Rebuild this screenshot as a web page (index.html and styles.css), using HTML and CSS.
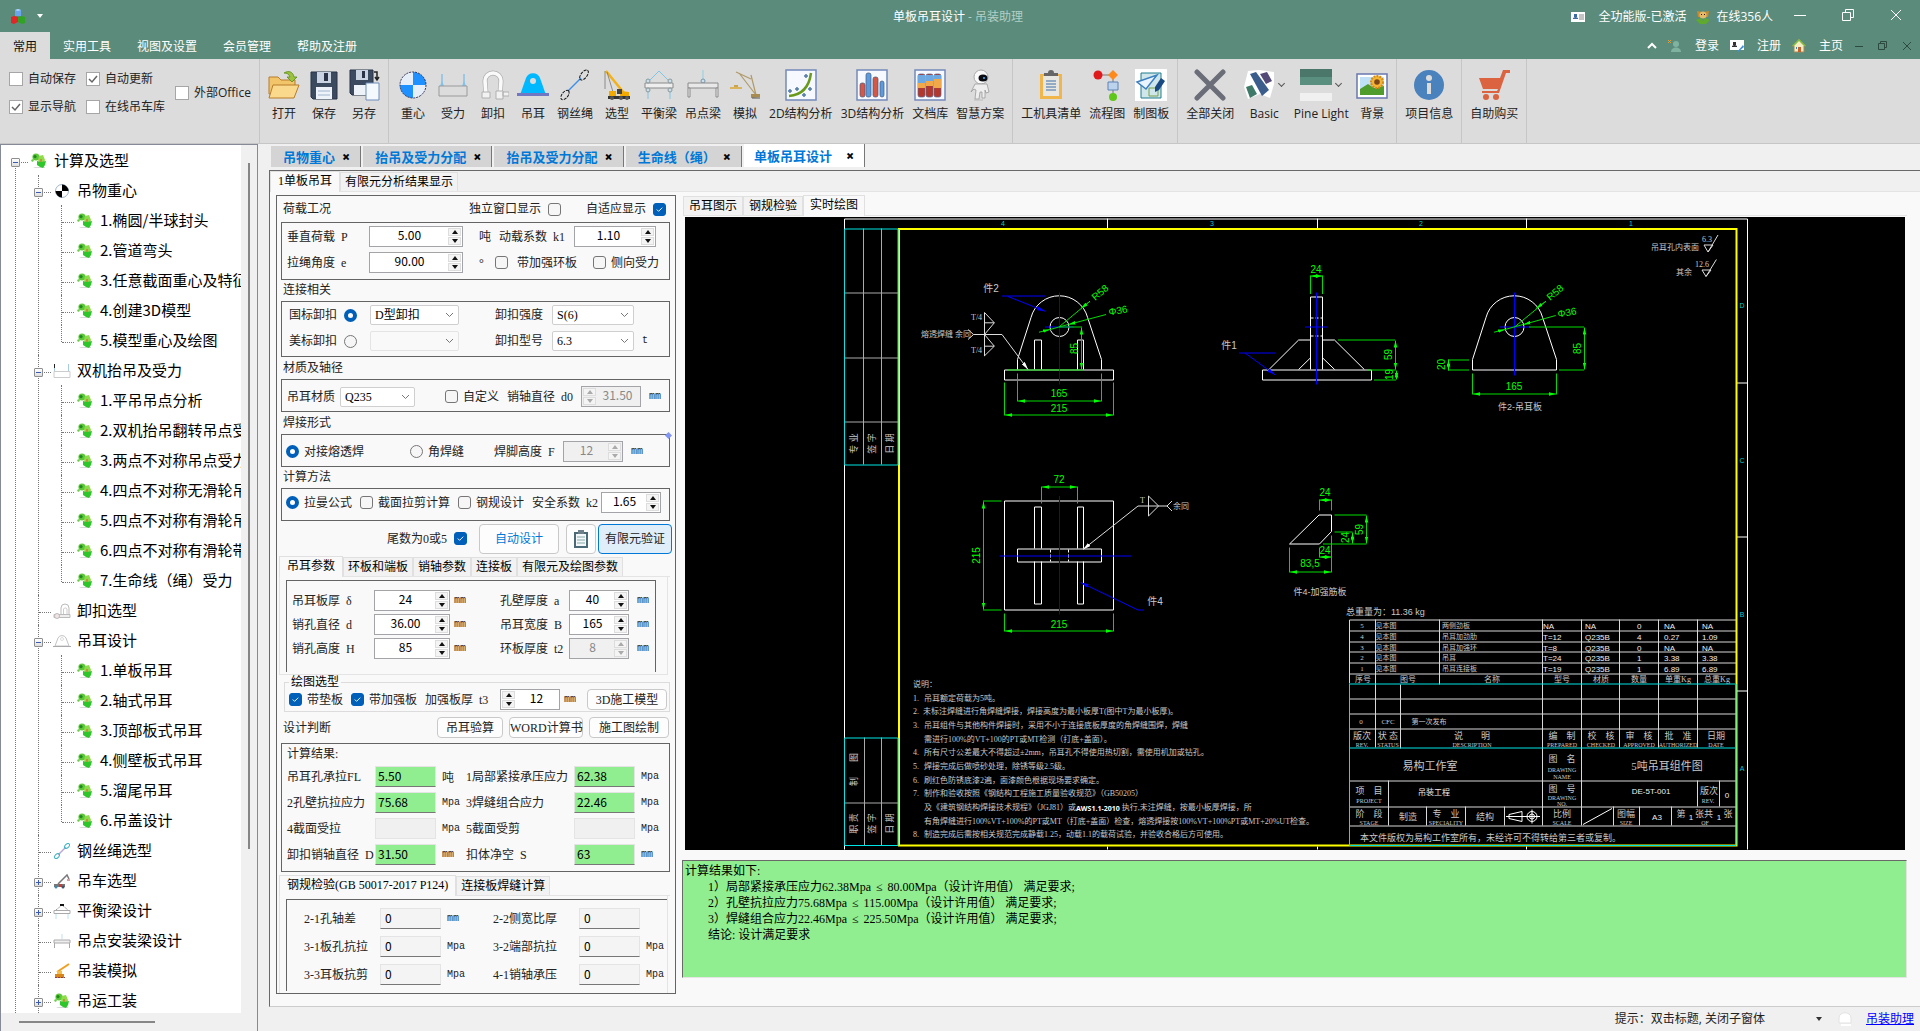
FILE: index.html
```html
<!DOCTYPE html>
<html lang="zh-CN">
<head>
  <meta charset="UTF-8">
  <meta name="viewport" content="width=device-width, initial-scale=1.0">
  <title>单板吊耳设计 - 吊装助理</title>
  <link rel="stylesheet" href="styles.css">
</head>
<body>
  <!-- Icon set -->
  <svg class="defs" aria-hidden="true">
    <symbol id="i-leaf" viewBox="0 0 16 16">
      <path d="M2 14h12v1H4z" fill="#d8d8d8"/>
      <circle cx="5" cy="4" r="3.6" fill="#5cc83a"/><circle cx="4" cy="3.6" r="1.6" fill="#1f8a1a"/>
      <path d="M8 3l4-1 2 5-1 3-4 1-2-4z" fill="#8fdc4a"/>
      <path d="M6 8l4 1 5-1-1 4-2 3-3-1-3-2z" fill="#2fc62c"/>
      <path d="M1 6l2 1-1 2-2-1z" fill="#6ccf48"/><path d="M9 6h2v3H9z" fill="#b39a3c"/>
    </symbol>
    <symbol id="i-cg" viewBox="0 0 16 16">
      <circle cx="8" cy="8" r="6.5" fill="#fff" stroke="#9fb4c8"/><path d="M8 8V1.5A6.5 6.5 0 0 1 14.5 8zM8 8v6.5A6.5 6.5 0 0 1 1.5 8z" fill="#000"/>
    </symbol>
    <symbol id="i-lift" viewBox="0 0 18 16">
      <path d="M1.5 1v7M15.5 1v7" stroke="#a8cbe4" fill="none"/><path d="M1.5 1v4" stroke="#222"/><path d="M1 8.5h16v6H1z" fill="#fff" stroke="#ccc"/>
    </symbol>
    <symbol id="i-shk" viewBox="0 0 18 16">
      <path d="M8 12V5a4 4 0 0 1 8 0v7" fill="none" stroke="#bbb"/><path d="M10.5 11V6a2 2 0 0 1 3.5 0v5" fill="none" stroke="#ccc"/><path d="M1 11.5h16v3H1z" fill="#eee" stroke="#bbb"/><circle cx="4" cy="13" r="2.5" fill="#f4e4e4" stroke="#bbb"/>
    </symbol>
    <symbol id="i-lugs" viewBox="0 0 18 16">
      <path d="M2 13l3-8a4.500 4.500 0 0 1 8 0l3 8z" fill="#fff" stroke="#c4c4c4"/><circle cx="9" cy="6" r="1.5" fill="none" stroke="#ddd"/><path d="M0 13.5h18" stroke="#aaa"/>
    </symbol>
    <symbol id="i-sling" viewBox="0 0 18 16">
      <path d="M5 12l8-8" stroke="#b8a8d8" stroke-width="1.5"/><ellipse cx="14" cy="3" rx="3" ry="1.8" transform="rotate(-45 14 3)" fill="none" stroke="#3cb4c0"/><ellipse cx="4" cy="13" rx="3" ry="1.8" transform="rotate(-45 4 13)" fill="none" stroke="#3cb4c0"/>
    </symbol>
    <symbol id="i-truck" viewBox="0 0 18 16">
      <path d="M5 11l9-9 2 4" fill="none" stroke="#777" stroke-width="1.5"/><path d="M14 6h3v2h-3z" fill="#d9a0a0"/><path d="M1 11h11v3H1z" fill="#777"/><path d="M6 11h3v3H6z" fill="#d23a3a"/><circle cx="3" cy="14" r="1.5" fill="#48a"/><circle cx="10" cy="14" r="1.5" fill="#456"/>
    </symbol>
    <symbol id="i-beam" viewBox="0 0 18 16">
      <path d="M3 7l6-5 6 5" fill="none" stroke="#999" stroke-dasharray="2 1"/><path d="M7 1h4v2H7z" fill="#111"/><path d="M1 7.5h16v3H1z" fill="#fff" stroke="#aaa"/><path d="M3 11v5M15 11v5" stroke="#b5e4f4"/>
    </symbol>
    <symbol id="i-sup" viewBox="0 0 18 16">
      <path d="M9 1v5" stroke="#c4dfe8"/><path d="M1 7h16v3H1z" fill="#eee" stroke="#aaa"/><path d="M1.5 10v5M16.5 10v5" stroke="#aaa"/>
    </symbol>
    <symbol id="i-sim" viewBox="0 0 18 16">
      <path d="M4 9L16 1" stroke="#f0a020" stroke-width="2"/><path d="M2 11h9v4H2z" fill="#d8861c"/><path d="M4 8h5v3H4z" fill="#f4c04c"/><path d="M2 14.5h10" stroke="#844" stroke-dasharray="2 1"/>
    </symbol>

    <symbol id="r-open" viewBox="0 0 32 32">
      <path d="M1 8h9l3 3h14v14H1z" fill="#f2c56b" stroke="#b67d2b"/><path d="M5 16h26l-5 13H1z" fill="#fbd98c" stroke="#b67d2b"/><path d="M16 4c5-3 9-1 10 4h3l-5 5-5-5h3c-1-3-3-4-6-4z" fill="#9cc23e" stroke="#5b8a1e" stroke-width=".8"/>
    </symbol>
    <symbol id="r-save" viewBox="0 0 32 32">
      <path d="M3 3h26v27H5l-2-2z" fill="#3c4a60" stroke="#273246"/><path d="M9 3h14v11H9z" fill="#c9d3e2"/><path d="M16 4h4v8h-4z" fill="#2a3446"/><path d="M8 18h16v12H8z" fill="#eef3f9"/><path d="M10 22h12M10 26h12" stroke="#9fb4cc"/>
    </symbol>
    <symbol id="r-saveas" viewBox="0 0 32 32">
      <path d="M2 1h23v25H4l-2-2z" fill="#3c4a60" stroke="#273246"/><path d="M8 1h12v10H8z" fill="#c9d3e2"/><path d="M14 2h3v7h-3z" fill="#2a3446"/><path d="M6 16h12v10H6z" fill="#eef3f9"/><path d="M18 14h13v17H18z" fill="#f4f8ff" stroke="#6f8cb8"/><path d="M26 3h3v8m-2-3l2 3 2-3" fill="none" stroke="#222" stroke-width="1.5"/>
    </symbol>
    <symbol id="r-cg" viewBox="0 0 32 32">
      <circle cx="16" cy="16" r="13" fill="#e6eef8"/><path d="M16 16V3a13 13 0 0 1 13 13zM16 16v13A13 13 0 0 1 3 16z" fill="#1e90ff"/><circle cx="16" cy="16" r="13" fill="none" stroke="#335" stroke-dasharray="2 1"/>
    </symbol>
    <symbol id="r-force" viewBox="0 0 32 32">
      <path d="M5 5v12M27 5v12" stroke="#5fb4ea"/><path d="M5 12l-2 5h4zM27 12l-2 5h4z" fill="#7fc3ee"/><path d="M2 17h28v10H2z" fill="none" stroke="#9a9a9a"/>
    </symbol>
    <symbol id="r-shk" viewBox="0 0 32 32">
      <path d="M9 26l-1-14a8 8 0 0 1 16 0l-1 14" fill="none" stroke="#b0b0b0" stroke-width="5"/><path d="M9 26l-1-14a8 8 0 0 1 16 0l-1 14" fill="none" stroke="#fafafa" stroke-width="3.6"/><path d="M5 23h8v6H5zM19 22h7v8h-7zM26 23h6v4h-6z" fill="#f2f2f2" stroke="#b0b0b0"/>
    </symbol>
    <symbol id="r-lug" viewBox="0 0 32 32">
      <path d="M3 26L9 9a7.500 7.500 0 0 1 14 0l6 17z" fill="#00b8ff"/><circle cx="16" cy="12" r="3" fill="#dcdcdc"/><path d="M0 24h32v3H0z" fill="#7078c4"/>
    </symbol>
    <symbol id="r-sling" viewBox="0 0 32 32">
      <path d="M9 22L22 9" stroke="#3f8fe8" stroke-width="1.5"/><ellipse cx="25" cy="6" rx="6" ry="3" transform="rotate(-52 25 6)" fill="none" stroke="#111" stroke-dasharray="3 1"/><ellipse cx="6" cy="26" rx="5.5" ry="3" transform="rotate(-52 6 26)" fill="none" stroke="#111" stroke-dasharray="3 1"/>
    </symbol>
    <symbol id="r-crane" viewBox="0 0 32 32">
      <path d="M5 2l18 22" stroke="#f5b014" stroke-width="2.5"/><path d="M4 2v18M6 3l6 20" stroke="#777" stroke-width=".8"/><path d="M8 22h7v6H8zM19 22l9 1v6h-9z" fill="#f2a900"/><path d="M7 27h22v3H7z" fill="#333"/><path d="M16 20h5v5h-5z" fill="#444"/><circle cx="11" cy="29" r="2" fill="#555"/><circle cx="20" cy="29" r="2" fill="#555"/><circle cx="26" cy="29" r="2" fill="#555"/>
    </symbol>
    <symbol id="r-beam" viewBox="0 0 32 32">
      <path d="M5 13L16 2l11 11M5 20v10M27 20v10" fill="none" stroke="#7fc6e6"/><path d="M2 14h28v5H2z" fill="#eee" stroke="#8a8a8a"/><circle cx="5" cy="12" r="2" fill="#cde" stroke="#899"/><circle cx="27" cy="12" r="2" fill="#cde" stroke="#899"/><circle cx="5" cy="21" r="2" fill="#cde" stroke="#899"/><circle cx="27" cy="21" r="2" fill="#cde" stroke="#899"/>
    </symbol>
    <symbol id="r-sup" viewBox="0 0 32 32">
      <path d="M16 1v11" stroke="#8fcfe4"/><circle cx="16" cy="12" r="2" fill="#cde" stroke="#79a"/><path d="M1 14h30v5H1z" fill="#e8e8e8" stroke="#8a8a8a"/><path d="M1 19h2v9H1zM29 19h2v9h-2z" fill="#eee" stroke="#8a8a8a"/>
    </symbol>
    <symbol id="r-sim" viewBox="0 0 32 32">
      <path d="M7 3l15 7M22 6l5 20M10 4l17 22" fill="none" stroke="#b09a68" stroke-width="1.2"/><path d="M22 25h9v3l-9 1z" fill="#a88b50"/><path d="M23 29h8" stroke="#555"/><path d="M1 18h12v2H1z" fill="#d9b45c"/><path d="M5 16h4v2H5z" fill="#c9a44c"/>
    </symbol>
    <symbol id="r-2d" viewBox="0 0 32 32">
      <path d="M1 1h30v30H1z" fill="#f6f9ff" stroke="#7489bb" stroke-width="1.5"/><path d="M4 27c13-1 20-8 22-23" fill="none" stroke="#6a9a1c" stroke-width="2.5"/><g fill="#9ab" stroke="#35679a"><circle cx="5" cy="22" r="1.3"/><circle cx="12" cy="20" r="1.3"/><circle cx="21" cy="7" r="1.3"/><circle cx="25" cy="20" r="1.3"/><circle cx="19" cy="26" r="1.3"/></g>
    </symbol>
    <symbol id="r-3d" viewBox="0 0 32 32">
      <path d="M1 1h30v30H1z" fill="#f6f9ff" stroke="#7489bb" stroke-width="1.5"/><g stroke="#46597e" stroke-width=".7"><rect x="4" y="14" width="5" height="14" rx="2" fill="#d55847"/><rect x="10" y="4" width="5" height="24" rx="2" fill="#5c9bdc"/><rect x="17" y="8" width="5" height="20" rx="2" fill="#d55847"/><rect x="24" y="12" width="4" height="16" rx="2" fill="#5c9bdc"/></g>
    </symbol>
    <symbol id="r-doc" viewBox="0 0 32 32">
      <path d="M1 1h30v30H1z" fill="#f6f9ff" stroke="#7489bb" stroke-width="1.5"/><g stroke="#57658a" stroke-width=".7"><rect x="4" y="5" width="7" height="23" rx="2" fill="#b5372b"/><rect x="12" y="5" width="7" height="23" rx="2" fill="#b5372b"/><rect x="20" y="5" width="7" height="23" rx="2" fill="#b5372b"/></g><path d="M4 6h7v8H4zM12 6h7v6h-7zM20 6h7v4h-7z" fill="#6ea8e0"/><path d="M4 14h7v5H4zM12 12h7v5h-7zM20 10h7v9h-7z" fill="#f0a84a"/>
    </symbol>
    <symbol id="r-robot" viewBox="0 0 32 32">
      <ellipse cx="17" cy="8" rx="7" ry="7" fill="#fafafa" stroke="#aaa"/><ellipse cx="19" cy="9" rx="4.5" ry="3.5" fill="#0b0d12"/><circle cx="20" cy="9" r="1" fill="#4fb5ff"/><path d="M11 15h12l2 8-3 1-1-3v8h-3v-6h-2l-1 7h-4l1-9-2-1-3 3z" fill="#eee" stroke="#999" stroke-width=".8"/><path d="M10 31h9" stroke="#bbb"/>
    </symbol>
    <symbol id="r-clip" viewBox="0 0 32 32">
      <path d="M5 5h22v25H5z" fill="#f0b64c"/><path d="M8 7h16v20H8z" fill="#e8e6e0"/><path d="M9 7V4h4a3 3 0 0 1 6 0h4v3z" fill="#666"/><path d="M11 12h10M11 15h10M11 18h10M11 21h10" stroke="#3f6fa8"/>
    </symbol>
    <symbol id="r-flow" viewBox="0 0 32 32">
      <path d="M8 6h14v22" fill="none" stroke="#777"/><circle cx="7" cy="6" r="4.5" fill="#e01a1a"/><path d="M22 1l5 5-5 5-5-5z" fill="#ff8a1c"/><path d="M17 13h10v8H17z" fill="#bcd3ee" stroke="#5c82b5"/><circle cx="22" cy="28" r="4" fill="#5fc61a"/>
    </symbol>
    <symbol id="r-board" viewBox="0 0 32 32">
      <path d="M0 0h32v32H0z" fill="#fff"/><path d="M6 4h20v25H6z" fill="#cfe7ea" stroke="#1e7c8c"/><path d="M2 13L22 6 11 20z" fill="#eaf4ff" stroke="#3b7fc0" stroke-width="1.5"/><path d="M14 19h9v8h-9z" fill="none" stroke="#77a04c"/><path d="M26 9l4 3-6 9-4 2v-5z" fill="#1a4a86"/>
    </symbol>
    <symbol id="r-x" viewBox="0 0 32 32"><path d="M3 3l26 26M29 3L3 29" stroke="#6b6e78" stroke-width="5" stroke-linecap="round"/></symbol>
    <symbol id="r-basic" viewBox="0 0 32 32">
      <path d="M5 2l11-1 15 2v12l-4 14-10-4-12 5-4-12z" fill="#fff"/><path d="M7 5l6-2 13 18-7 6z" fill="#3a5d8c"/><path d="M17 5l7-2 5 9-6 3z" fill="#544a78"/><path d="M3 18l6-2 5 9-7 4z" fill="#3f7a68"/>
    </symbol>
    <symbol id="r-pine" viewBox="0 0 32 32">
      <path d="M0 0h32v9H0z" fill="#4a776a"/><path d="M0 8h32v8H0z" fill="#5a8f7f"/><path d="M0 16h32v8H0z" fill="#dcdcdc"/><path d="M0 24h32v8H0z" fill="#f0f0f0"/>
    </symbol>
    <symbol id="r-sun" viewBox="0 0 32 32">
      <path d="M1 5h30v24H1z" fill="#fff" stroke="#6a78b0" stroke-width="1.5"/><path d="M4 8h24v18H4z" fill="#bfe0f5"/><path d="M4 20l8-5 6 4 10-2v9H4z" fill="#4f9c2c"/><circle cx="21" cy="13" r="6" fill="#f4b535" stroke="#d48a14" stroke-width="2" stroke-dasharray="2 1"/><circle cx="21" cy="13" r="2.8" fill="#7a4518"/>
    </symbol>
    <symbol id="r-info" viewBox="0 0 32 32"><circle cx="16" cy="16" r="15" fill="#4a82bd"/><circle cx="16" cy="9" r="3" fill="#dcdcdc"/><path d="M14 14h4v11h-4z" fill="#dcdcdc"/></symbol>
    <symbol id="r-cart" viewBox="0 0 32 32"><path d="M1 9h21l3-8h7v3h-4l-7 20H4v-2h15l1-2H5z" fill="#db6340"/><circle cx="8" cy="28" r="3" fill="#db6340"/><circle cx="18" cy="28" r="3" fill="#db6340"/></symbol>
  </svg>

  <!-- Title bar -->
  <header class="titlebar">
    <div class="quick">
      <svg width="16" height="16" viewBox="0 0 16 16"><path d="M5 1l3-1 3 1v6H5z" fill="#6aa6ec"/><path d="M5 1l3-1 3 1-3 1z" fill="#b4d6fa"/><path d="M1 8l3-1 4 1v5l-4 2-3-1z" fill="#e02626"/><path d="M8 8l4-1 3 1v6l-3 1-4-2z" fill="#30a326"/></svg>
      <svg width="8" height="5" viewBox="0 0 8 5"><path d="M1 0h6L4 4z" fill="#fff"/></svg>
    </div>
    <h1>单板吊耳设计 <span>- 吊装助理</span></h1>
    <div class="licence">
      <svg width="14" height="12" viewBox="0 0 14 12"><path d="M0 1h14v10H0z" fill="#fff"/><path d="M2 8h5V7L5 6H4L2 7zM3 3h3v3H3z" fill="#3c6ea5"/><path d="M8 4h5M8 6h5M8 8h5" stroke="#888"/></svg>
      <span class="state">全功能版-已激活</span>
      <svg width="16" height="16" viewBox="0 0 16 16"><path d="M2 2l5 1 2 0 5-1-1 6H3z" fill="#c98a2e"/><circle cx="8" cy="6" r="3.5" fill="#e3b96a"/><path d="M1 11l5-2 2 3 2-3 5 2-4 4H5z" fill="#5faa2c"/><path d="M6 5h1v1H6zM9 5h1v1H9z" fill="#312"/></svg>
      <span>在线356人</span>
    </div>
    <div class="winbtns">
      <button aria-label="最小化"><svg width="12" height="12"><path d="M0 6.5h12" stroke="#fff"/></svg></button>
      <button aria-label="还原"><svg width="12" height="12"><path d="M.5 3.5h8v8h-8zM3.5 3V.5h8v8H9" fill="none" stroke="#fff"/></svg></button>
      <button aria-label="关闭"><svg width="12" height="12"><path d="M1 1l10 10M11 1L1 11" stroke="#fff"/></svg></button>
    </div>
  </header>

  <nav class="menubar">
    <a class="menu active" href="#">常用</a>
    <a class="menu" href="#">实用工具</a>
    <a class="menu" href="#">视图及设置</a>
    <a class="menu" href="#">会员管理</a>
    <a class="menu" href="#">帮助及注册</a>
    <div class="account">
      <svg width="10" height="8"><path d="M1 6l4-4 4 4" fill="none" stroke="#fff" stroke-width="2"/></svg>
      <a href="#"><svg width="14" height="14"><circle cx="8" cy="5" r="3" fill="#7fb3a0"/><path d="M3 13c0-6 10-6 10 0z" fill="#7fb3a0"/><path d="M0 1l3 3M3 1L0 4" stroke="#d8a040"/></svg>登录</a>
      <a href="#"><svg width="14" height="14"><path d="M0 1h14v10H0z" fill="#fff"/><path d="M2 8h5V7L5 6H4L2 7zM3 3h3v3H3z" fill="#333"/><path d="M13 6l1 2-6 5H7z" fill="#3f8fe0"/></svg>注册</a>
      <a href="#"><svg width="14" height="15"><path d="M7 1L0 8h2v6h10V8h2z" fill="#f8ecc4" stroke="#9c8a5a"/><path d="M7 1L0 8h2l5-5 5 5h2z" fill="#7ac143"/><path d="M6 9h3v5H6z" fill="#c2602c"/><path d="M4 9h1v2H4z" fill="#48a"/></svg>主页</a>
      <span class="mdi">
        <svg width="10" height="10"><path d="M1 5.5h8" stroke="#2d4a41"/></svg>
        <svg width="10" height="10"><path d="M.5 2.5h6v6h-6zM2.5 2V.5h6v6H7" fill="none" stroke="#2d4a41"/></svg>
        <svg width="10" height="10"><path d="M1 1l8 8M9 1L1 9" stroke="#2d4a41"/></svg>
      </span>
    </div>
  </nav>

  <!-- Ribbon -->
  <section class="ribbon">
    <div class="options">
      <div class="col">
        <label><input type="checkbox">自动保存</label>
        <label><input type="checkbox" checked>显示导航</label>
      </div>
      <div class="col">
        <label><input type="checkbox" checked>自动更新</label>
        <label><input type="checkbox">在线吊车库</label>
      </div>
      <div class="col mid">
        <label><input type="checkbox">外部Office</label>
      </div>
    </div>
    <div class="group">
      <button><svg><use href="#r-open"/></svg>打开</button>
      <button><svg><use href="#r-save"/></svg>保存</button>
      <button><svg><use href="#r-saveas"/></svg>另存</button>
    </div>
    <div class="group">
      <button><svg><use href="#r-cg"/></svg>重心</button>
      <button><svg><use href="#r-force"/></svg>受力</button>
      <button><svg><use href="#r-shk"/></svg>卸扣</button>
      <button><svg><use href="#r-lug"/></svg>吊耳</button>
      <button><svg><use href="#r-sling"/></svg>钢丝绳</button>
      <button><svg><use href="#r-crane"/></svg>选型</button>
      <button><svg><use href="#r-beam"/></svg>平衡梁</button>
      <button><svg><use href="#r-sup"/></svg>吊点梁</button>
      <button><svg><use href="#r-sim"/></svg>模拟</button>
      <button><svg><use href="#r-2d"/></svg>2D结构分析</button>
      <button><svg><use href="#r-3d"/></svg>3D结构分析</button>
      <button><svg><use href="#r-doc"/></svg>文档库</button>
      <button><svg><use href="#r-robot"/></svg>智慧方案</button>
    </div>
    <div class="group">
      <button><svg><use href="#r-clip"/></svg>工机具清单</button>
      <button><svg><use href="#r-flow"/></svg>流程图</button>
      <button><svg><use href="#r-board"/></svg>制图板</button>
    </div>
    <div class="group">
      <button><svg><use href="#r-x"/></svg>全部关闭</button>
      <button class="drop"><span><svg><use href="#r-basic"/></svg><i></i></span>Basic</button>
      <button class="drop wide"><span><svg><use href="#r-pine"/></svg><i></i></span>Pine Light</button>
      <button><svg><use href="#r-sun"/></svg>背景</button>
    </div>
    <div class="group">
      <button><svg><use href="#r-info"/></svg>项目信息</button>
    </div>
    <div class="group">
      <button><svg><use href="#r-cart"/></svg>自助购买</button>
    </div>
  </section>

  <main class="workspace">
    <!-- Navigation tree -->
    <aside class="sidebar">
      <div class="tree-wrap">
        <ul class="tree">
          <li class="open">
            <div class="node"><b class="exp minus"></b><svg><use href="#i-leaf"/></svg>计算及选型</div>
            <ul>
              <li><div class="node"><b class="exp minus"></b><svg><use href="#i-cg"/></svg>吊物重心</div>
                <ul>
                  <li><div class="node"><svg><use href="#i-leaf"/></svg>1.椭圆/半球封头</div></li>
                  <li><div class="node"><svg><use href="#i-leaf"/></svg>2.管道弯头</div></li>
                  <li><div class="node"><svg><use href="#i-leaf"/></svg>3.任意截面重心及特征</div></li>
                  <li><div class="node"><svg><use href="#i-leaf"/></svg>4.创建3D模型</div></li>
                  <li><div class="node"><svg><use href="#i-leaf"/></svg>5.模型重心及绘图</div></li>
                </ul>
              </li>
              <li><div class="node"><b class="exp minus"></b><svg><use href="#i-lift"/></svg>双机抬吊及受力</div>
                <ul>
                  <li><div class="node"><svg><use href="#i-leaf"/></svg>1.平吊吊点分析</div></li>
                  <li><div class="node"><svg><use href="#i-leaf"/></svg>2.双机抬吊翻转吊点受力</div></li>
                  <li><div class="node"><svg><use href="#i-leaf"/></svg>3.两点不对称吊点受力</div></li>
                  <li><div class="node"><svg><use href="#i-leaf"/></svg>4.四点不对称无滑轮吊点</div></li>
                  <li><div class="node"><svg><use href="#i-leaf"/></svg>5.四点不对称有滑轮吊点</div></li>
                  <li><div class="node"><svg><use href="#i-leaf"/></svg>6.四点不对称有滑轮带梁</div></li>
                  <li><div class="node"><svg><use href="#i-leaf"/></svg>7.生命线（绳）受力</div></li>
                </ul>
              </li>
              <li><div class="node"><svg><use href="#i-shk"/></svg>卸扣选型</div></li>
              <li><div class="node"><b class="exp minus"></b><svg><use href="#i-lugs"/></svg>吊耳设计</div>
                <ul>
                  <li><div class="node"><svg><use href="#i-leaf"/></svg>1.单板吊耳</div></li>
                  <li><div class="node"><svg><use href="#i-leaf"/></svg>2.轴式吊耳</div></li>
                  <li><div class="node"><svg><use href="#i-leaf"/></svg>3.顶部板式吊耳</div></li>
                  <li><div class="node"><svg><use href="#i-leaf"/></svg>4.侧壁板式吊耳</div></li>
                  <li><div class="node"><svg><use href="#i-leaf"/></svg>5.溜尾吊耳</div></li>
                  <li><div class="node"><svg><use href="#i-leaf"/></svg>6.吊盖设计</div></li>
                </ul>
              </li>
              <li><div class="node"><svg><use href="#i-sling"/></svg>钢丝绳选型</div></li>
              <li><div class="node"><b class="exp plus"></b><svg><use href="#i-truck"/></svg>吊车选型</div></li>
              <li><div class="node"><b class="exp plus"></b><svg><use href="#i-beam"/></svg>平衡梁设计</div></li>
              <li><div class="node"><svg><use href="#i-sup"/></svg>吊点安装梁设计</div></li>
              <li><div class="node"><svg><use href="#i-sim"/></svg>吊装模拟</div></li>
              <li><div class="node"><b class="exp plus"></b><svg><use href="#i-leaf"/></svg>吊运工装</div></li>
            </ul>
          </li>
        </ul>
      </div>
      <div class="vbar"><i></i></div>
      <div class="hbar"><i></i></div>
    </aside>

    <div class="docs">
      <div class="doctabs">
        <button class="dt">吊物重心<b>×</b></button>
        <button class="dt">抬吊及受力分配<b>×</b></button>
        <button class="dt">抬吊及受力分配<b>×</b></button>
        <button class="dt">生命线（绳）<b>×</b></button>
        <button class="dt on">单板吊耳设计<b>×</b></button>
      </div>

      <div class="page">
        <div class="tabs top">
          <button class="tab on">1单板吊耳</button>
          <button class="tab">有限元分析结果显示</button>
        </div>
        <div class="split">

          <!-- Input form -->
          <form class="form">
            <div class="head">
              <h2>荷载工况</h2>
              <label class="ck rev far">独立窗口显示<input type="checkbox"></label>
              <label class="ck rev">自适应显示<input type="checkbox" checked></label>
            </div>
            <div class="box load">
              <div class="row">
                <label class="w82" for="p">垂直荷载&ensp;P</label>
                <span class="spin w94"><input id="p" value="5.00"><span class="ud"><button type="button" aria-label="增加"></button><button type="button" aria-label="减少"></button></span></span>
                <span class="g16 w20">吨</span>
                <label class="w75" for="k1">动载系数&ensp;k1</label>
                <span class="spin w82"><input id="k1" value="1.10"><span class="ud"><button type="button" aria-label="增加"></button><button type="button" aria-label="减少"></button></span></span>
              </div>
              <div class="row">
                <label class="w82" for="e">拉绳角度&ensp;e</label>
                <span class="spin w94"><input id="e" value="90.00"><span class="ud"><button type="button" aria-label="增加"></button><button type="button" aria-label="减少"></button></span></span>
                <span class="g16 w16">°</span>
                <label class="ck loose"><input type="checkbox">带加强环板</label>
                <label class="ck g16"><input type="checkbox">侧向受力</label>
              </div>
            </div>

            <h2 class="cap">连接相关</h2>
            <div class="box link">
              <div class="row">
                <label class="ck rev w81">国标卸扣<input type="radio" name="std" checked></label>
                <select class="w89" aria-label="国标卸扣"><option>D型卸扣</option></select>
                <label class="g36 w57" for="grade">卸扣强度</label>
                <select class="w82" id="grade"><option>S(6)</option></select>
              </div>
              <div class="row">
                <label class="ck rev w81">美标卸扣<input type="radio" name="std"></label>
                <select class="w89" disabled aria-label="美标卸扣"><option></option></select>
                <label class="g36 w57" for="model">卸扣型号</label>
                <select class="w82" id="model"><option>6.3</option></select>
                <span class="unit g8">t</span>
              </div>
            </div>

            <h2 class="cap tall">材质及轴径</h2>
            <div class="box mat">
              <div class="row">
                <label class="w53" for="mat">吊耳材质</label>
                <select class="w75" id="mat"><option>Q235</option></select>
                <label class="ck g30"><input type="checkbox">自定义</label>
                <label class="g8 w74" for="d0">销轴直径&ensp;d0</label>
                <span class="spin left off w60"><input id="d0" value="31.50" disabled><span class="ud"><button type="button" disabled aria-label="增加"></button><button type="button" disabled aria-label="减少"></button></span></span>
                <span class="unit g8">mm</span>
              </div>
            </div>

            <h2 class="cap tall">焊接形式</h2>
            <div class="box weld">
              <div class="row">
                <label class="ck"><input type="radio" name="weld" checked>对接熔透焊</label>
                <label class="ck g46"><input type="radio" name="weld">角焊缝</label>
                <label class="g30 w69" for="f">焊脚高度&ensp;F</label>
                <span class="spin off w60"><input id="f" value="12" disabled><span class="ud"><button type="button" disabled aria-label="增加"></button><button type="button" disabled aria-label="减少"></button></span></span>
                <span class="unit g8">mm</span>
              </div>
            </div>

            <h2 class="cap">计算方法</h2>
            <div class="box calc">
              <div class="row">
                <label class="ck"><input type="radio" name="m" checked>拉曼公式</label>
                <label class="ck g8"><input type="checkbox">截面拉剪计算</label>
                <label class="ck g8"><input type="checkbox">钢规设计</label>
                <label class="g8 w69" for="k2">安全系数&ensp;k2</label>
                <span class="spin w60"><input id="k2" value="1.65"><span class="ud"><button type="button" aria-label="增加"></button><button type="button" aria-label="减少"></button></span></span>
              </div>
            </div>

            <div class="actions">
              <label class="ck rev">尾数为0或5<input type="checkbox" checked></label>
              <button type="button" class="btn auto">自动设计</button>
              <button type="button" class="btn clip" aria-label="复制"><svg width="16" height="20" viewBox="0 0 16 20"><path d="M1 3h14v16H1z" fill="#4a6a78"/><path d="M3 5h10v12H3z" fill="#f4f8fa"/><path d="M5 1h6v4H5z" fill="#6d7f88"/><path d="M4 8h8M4 11h8M4 14h8" stroke="#8aa"/></svg></button>
              <button type="button" class="btn primary">有限元验证</button>
            </div>

            <div class="tabs">
              <button type="button" class="tab on">吊耳参数</button>
              <button type="button" class="tab">环板和端板</button>
              <button type="button" class="tab">销轴参数</button>
              <button type="button" class="tab">连接板</button>
              <button type="button" class="tab">有限元及绘图参数</button>
            </div>
            <div class="tabpage">
              <div class="sheet">
                <div class="row">
                  <label class="w82" for="dl">吊耳板厚&ensp;δ</label>
                  <span class="spin w76"><input id="dl" value="24"><span class="ud"><button type="button" aria-label="增加"></button><button type="button" aria-label="减少"></button></span></span>
                  <span class="unit w50">mm</span>
                  <label class="w69" for="a">孔壁厚度&ensp;a</label>
                  <span class="spin w60"><input id="a" value="40"><span class="ud"><button type="button" aria-label="增加"></button><button type="button" aria-label="减少"></button></span></span>
                  <span class="unit g8">mm</span>
                </div>
                <div class="row">
                  <label class="w82" for="d">销孔直径&ensp;d</label>
                  <span class="spin w76"><input id="d" value="36.00"><span class="ud"><button type="button" aria-label="增加"></button><button type="button" aria-label="减少"></button></span></span>
                  <span class="unit w50">mm</span>
                  <label class="w69" for="b">吊耳宽度&ensp;B</label>
                  <span class="spin w60"><input id="b" value="165"><span class="ud"><button type="button" aria-label="增加"></button><button type="button" aria-label="减少"></button></span></span>
                  <span class="unit g8">mm</span>
                </div>
                <div class="row">
                  <label class="w82" for="h">销孔高度&ensp;H</label>
                  <span class="spin w76"><input id="h" value="85"><span class="ud"><button type="button" aria-label="增加"></button><button type="button" aria-label="减少"></button></span></span>
                  <span class="unit w50">mm</span>
                  <label class="w69" for="t2">环板厚度&ensp;t2</label>
                  <span class="spin off w60"><input id="t2" value="8" disabled><span class="ud"><button type="button" disabled aria-label="增加"></button><button type="button" disabled aria-label="减少"></button></span></span>
                  <span class="unit g8">mm</span>
                </div>
              </div>
            </div>

            <fieldset>
              <legend>绘图选型</legend>
              <div class="row">
                <label class="ck"><input type="checkbox" checked>带垫板</label>
                <label class="ck g8"><input type="checkbox" checked>带加强板</label>
                <label class="g8 w75" for="t3">加强板厚&ensp;t3</label>
                <span class="spin left w60"><input id="t3" value="12"><span class="ud"><button type="button" aria-label="增加"></button><button type="button" aria-label="减少"></button></span></span>
                <span class="unit">mm</span>
                <button type="button" class="btn sm push w80">3D施工模型</button>
              </div>
            </fieldset>

            <div class="judge">
              <h2>设计判断</h2>
              <button type="button" class="btn sm w66">吊耳验算</button>
              <button type="button" class="btn sm w74">WORD计算书</button>
              <button type="button" class="btn sm w80">施工图绘制</button>
            </div>
            <div class="box result">
              <h2>计算结果:</h2>
              <div class="row">
                <label for="r1">吊耳孔承拉FL</label><input class="val" id="r1" value="5.50" readonly><span class="unit cn">吨</span>
                <label for="r2">1局部紧接承压应力</label><input class="val" id="r2" value="62.38" readonly><span class="unit">Mpa</span>
              </div>
              <div class="row">
                <label for="r3">2孔壁抗拉应力</label><input class="val" id="r3" value="75.68" readonly><span class="unit">Mpa</span>
                <label for="r4">3焊缝组合应力</label><input class="val" id="r4" value="22.46" readonly><span class="unit">Mpa</span>
              </div>
              <div class="row">
                <label for="r5">4截面受拉</label><input class="val none" id="r5" disabled><span class="unit">Mpa</span>
                <label for="r6">5截面受剪</label><input class="val none" id="r6" disabled><span class="unit">Mpa</span>
              </div>
              <div class="row">
                <label for="r7">卸扣销轴直径&ensp;D</label><input class="val" id="r7" value="31.50" readonly><span class="unit">mm</span>
                <label for="r8">扣体净空&ensp;S</label><input class="val" id="r8" value="63" readonly><span class="unit">mm</span>
              </div>
            </div>

            <div class="tabs last">
              <button type="button" class="tab on">钢规检验(GB 50017-2017 P124)</button>
              <button type="button" class="tab">连接板焊缝计算</button>
            </div>
            <div class="tabpage grow">
              <div class="sheet code">
                <div class="row">
                  <label for="c1">2-1孔轴差</label><input class="val zero" id="c1" value="0" readonly><span class="unit">mm</span>
                  <label for="c2">2-2侧宽比厚</label><input class="val zero" id="c2" value="0" readonly><span class="unit"></span>
                </div>
                <div class="row">
                  <label for="c3">3-1板孔抗拉</label><input class="val zero" id="c3" value="0" readonly><span class="unit">Mpa</span>
                  <label for="c4">3-2端部抗拉</label><input class="val zero" id="c4" value="0" readonly><span class="unit">Mpa</span>
                </div>
                <div class="row">
                  <label for="c5">3-3耳板抗剪</label><input class="val zero" id="c5" value="0" readonly><span class="unit">Mpa</span>
                  <label for="c6">4-1销轴承压</label><input class="val zero" id="c6" value="0" readonly><span class="unit">Mpa</span>
                </div>
              </div>
            </div>
          </form>

          <!-- Drawing and report -->
          <section class="view">
            <div class="tabs">
              <button class="tab">吊耳图示</button>
              <button class="tab">钢规检验</button>
              <button class="tab on">实时绘图</button>
            </div>
            <svg class="cad" viewBox="685 217 1220 632" preserveAspectRatio="xMidYMid meet">
              <defs>
                <marker id="ag" viewBox="0 0 8 4" refX="8" refY="2" markerWidth="7" markerHeight="4" markerUnits="userSpaceOnUse" orient="auto-start-reverse"><path d="M0 0L8 2L0 4z" fill="#0f0"/></marker>
                <marker id="ab" viewBox="0 0 8 4" refX="8" refY="2" markerWidth="8" markerHeight="4" markerUnits="userSpaceOnUse" orient="auto"><path d="M0 0L8 2L0 4z" fill="#00f"/></marker>
                <marker id="aw" viewBox="0 0 8 4" refX="8" refY="2" markerWidth="8" markerHeight="4" markerUnits="userSpaceOnUse" orient="auto-start-reverse"><path d="M0 0L8 2L0 4z" fill="#fff"/></marker>
              </defs>

              <!-- sheet frame -->
              <g class="w">
                <path d="M844.5 849V218.5H1747.5V849"/>
                <path d="M1107.5 218v10M1317.5 218v10M1526.5 218v10M1107.5 846v3M1317.5 846v3M1526.5 846v3M1737 382.5h10M1737 536.5h10M1737 690.5h10"/>
              </g>
              <g class="gr">
                <path d="M863.5 228V464M881.5 228V464M845 292.5h53M845 357.5h53M845 421.5h53M864.5 737v108M881.5 737v108M845 802.5h53"/>
              </g>
              <rect x="899" y="228.5" width="837.5" height="616.5" fill="none" stroke="#ff0" stroke-width="2"/>
              <path class="c" d="M844.5 228.5H898V464.5H844.5zM844.5 737.5H898V845H844.5z"/>
              <g class="zone">
                <text x="1003" y="223">4</text><text x="1212" y="223">3</text><text x="1421" y="223">2</text><text x="1631" y="223">1</text>
                <text x="1742" y="305">D</text><text x="1742" y="460">C</text><text x="1742" y="614">B</text><text x="1742" y="768">A</text>
              </g>
              <g class="side">
                <text transform="translate(854 443) rotate(-90)">专 业</text><text transform="translate(872 443) rotate(-90)">签 字</text><text transform="translate(890 443) rotate(-90)">日 期</text>
                <text transform="translate(854 757) rotate(-90)">图</text><text transform="translate(854 781) rotate(-90)">制</text>
                <text transform="translate(854 823) rotate(-90)">职 责</text><text transform="translate(872 823) rotate(-90)">签 字</text><text transform="translate(890 823) rotate(-90)">日 期</text>
              </g>

              <!-- front view -->
              <path class="w" d="M1004.5 369.5h109v10h-109zM1017.5 369V359L1031 317A29.3 29.3 0 0 1 1087.6 317L1101.5 359V369M1034.5 369v-29.5h7V369M1077.5 369v-29.5h6V369"/>
              <circle class="w" cx="1059.5" cy="326.5" r="9.5"/>
              <path class="b" d="M1059.5 292V384M1045 326.5h29M1002 295.5h43"/>
              <path class="b" d="M1008 296L1045 310.7" marker-end="url(#ab)"/>
              <path class="n" d="M1008 369.5h75M1059 326.5h23M1017.5 373v28M1101.5 373v28M1004.5 382v33M1113.5 382v33M1059.5 326L1090 300.7"/>
              <path class="n" d="M1090 300.7L1081 308" marker-end="url(#ag)"/>
              <path class="n" d="M1106 314L1068.5 324" marker-end="url(#ag)"/><path class="n" d="M1039 331.7L1050 329" marker-end="url(#ag)"/><path class="n" d="M1050 329L1068 324"/>
              <path class="n a2" d="M1081.5 327V369"/><path class="n a2" d="M1018 400.5H1101"/><path class="n a2" d="M1005 414.5H1113"/>
              <g class="dim">
                <text x="1059" y="393">165</text><text x="1059" y="408">215</text>
                <text transform="translate(1074 348) rotate(-90)">85</text><text transform="translate(1100 292) rotate(-40)">R58</text><text transform="translate(1118 310) rotate(-10)">Φ36</text>
              </g>
              <g class="gr2"><path d="M968 329l5.5 5-5.5 5M973.5 334H1002M984.5 312V355.5M984.5 312L994.3 322.3H984.5M994.3 322.3L984.5 334L994.3 345.7H984.5M994.3 345.7L984.5 355.3"/><path d="M1002 334L1028 369" marker-end="url(#aw)"/></g>
              <text class="tiny" x="921" y="334">熔透焊缝 余同</text><text class="tiny" x="971" y="317">T/4</text><text class="tiny" x="971" y="350">T/4</text>
              <text class="part" x="991" y="288">件2</text>

              <!-- side view -->
              <path class="w" d="M1262.5 369.5h109v10h-109zM1310.5 369V296.5h12V369M1269 369L1298.6 339.5h12M1298.6 369L1310.5 357.3M1322.5 339.5h12L1364.3 369M1322.5 357.3L1334.6 369"/>
              <path class="w dash" d="M1310.5 317.5h12M1310.5 335.5h12"/>
              <path class="b" d="M1316.5 292V384M1305 326.5h22.5M1239 352.5h36"/><path class="b" d="M1245 352.5L1275 374.3" marker-end="url(#ab)"/>
              <path class="n" d="M1310.5 275v18.5M1322.5 275v18.5M1338 339.5h57M1368 369.5h28M1374 379.5h22"/>
              <path class="n a2" d="M1310.5 275.5h12"/><path class="n a2" d="M1395.5 340V369"/><path class="n a2" d="M1396.5 370v9"/>
              <g class="dim"><text x="1316" y="269">24</text><text transform="translate(1388 354) rotate(-90)">59</text><text transform="translate(1389 374) rotate(-90)">19</text></g>
              <text class="part" x="1229" y="345">件1</text>

              <!-- plate -->
              <path class="w" d="M1472.5 369.5V359L1486 317A29.3 29.3 0 0 1 1542.6 317L1556.5 359V369.5z"/><circle class="w" cx="1514.5" cy="326.5" r="9.5"/>
              <path class="b" d="M1514.5 292V375M1500 326.5h29"/>
              <path class="n" d="M1529 326.5h55M1559 369.5h25M1448 359.5h21M1448 369.5h21M1472.5 373v21M1556.5 373v21M1514.5 326.5L1546 300.7"/>
              <path class="n" d="M1546 300.7L1536 308" marker-end="url(#ag)"/><path class="n" d="M1555.7 315L1523.5 324" marker-end="url(#ag)"/><path class="n" d="M1494 331.7L1505 329" marker-end="url(#ag)"/><path class="n" d="M1505 329L1523 324"/>
              <path class="n a2" d="M1584.5 327V369"/><path class="n a2" d="M1448.5 359V370"/><path class="n a2" d="M1473 393.5H1556"/>
              <g class="dim"><text x="1514" y="386">165</text><text transform="translate(1577 348) rotate(-90)">85</text><text transform="translate(1441 364) rotate(-90)">20</text><text transform="translate(1555 292) rotate(-40)">R58</text><text transform="translate(1567 312) rotate(-10)">Φ36</text></g>
              <text class="cap2" x="1520" y="406">件2-吊耳板</text>

              <!-- surface marks -->
              <text class="tiny" x="1651" y="247">吊耳孔内表面</text><text class="tiny" x="1676" y="272">其余</text><text class="tiny" x="1702" y="239">6.3</text><text class="tiny" x="1695" y="264">12.6</text>
              <path class="gr2" d="M1704 244.5h9L1708 251.5zM1708 251.5L1718 234.5M1702 269.5h9L1706 276zM1706 276L1716.4 259"/>

              <!-- plan view -->
              <path class="w" d="M1004.5 500.5h109v109h-109zM1034.5 548v-41.5h7V548M1077.5 548v-41.5h6V548M1034.5 561v42.5h7V561M1077.5 561v42.5h6V561M1017.5 548.5h84v13h-84z"/>
              <path class="w dash" d="M1050.5 549v12M1068.5 549v12"/>
              <path class="b" d="M1059.5 495.5V614M1000 555.5h131M1138 609.5h6"/><path class="b" d="M1138 609.5L1080.7 582" marker-end="url(#ab)"/>
              <path class="n" d="M1041.5 486v17M1077.5 486v17M983 500.5h18.5M983 609.5h18.5M1004.5 613v18M1113.5 613v18"/>
              <path class="n a2" d="M1042 486.5h35"/><path class="n a2" d="M983.5 501V609"/><path class="n a2" d="M1005 630.5H1113"/>
              <g class="dim"><text x="1059" y="479">72</text><text x="1059" y="624">215</text><text transform="translate(976 555) rotate(-90)">215</text></g>
              <g class="gr2"><path d="M1138 505.5L1083 549" marker-end="url(#aw)"/><path d="M1138 505.5h29M1148.5 495.5L1158.6 505.5L1148.5 515.5zM1172 500.5l-5 5 5 5"/></g>
              <text class="tiny" x="1140" y="500">T</text><text class="tiny" x="1173" y="506">余同</text><text class="part" x="1155" y="601">件4</text>

              <!-- stiffener -->
              <path class="w" d="M1289.5 543.5L1319 514.5h12.5V531L1319.5 543.5z"/>
              <path class="n" d="M1319.5 499v11M1331.5 499v11M1334.5 514.5h32M1334.5 531.5h18M1323 543.5h43.5M1319.5 547v10M1331.5 535v37M1289.5 547v25"/>
              <path class="n a2" d="M1319.5 499.5h12"/><path class="n a2" d="M1366.5 515v28"/><path class="n a2" d="M1352.5 532v11"/><path class="n a2" d="M1319.5 556.5h12"/><path class="n a2" d="M1290 571.5h41"/>
              <g class="dim"><text x="1325" y="492">24</text><text x="1325" y="550">24</text><text x="1310" y="563">83,5</text><text transform="translate(1359 529) rotate(-90)">59</text><text transform="translate(1345 537) rotate(-90)">24</text></g>
              <text class="cap2" x="1320" y="591">件4-加强筋板</text>
              <text class="wt" x="1346" y="611">总重量为：11.36 kg</text>

              <!-- notes -->
              <g class="notes">
                <text x="913" y="684">说明：</text>
                <text x="913" y="698">1.</text><text x="924" y="698">吊耳额定荷载为5吨。</text>
                <text x="913" y="711">2.</text><text x="923" y="711">未标注焊缝进行角焊缝焊接，焊接高度为最小板厚T(图中T为最小板厚)。</text>
                <text x="913" y="725">3.</text><text x="924" y="725">吊耳组件与其他构件焊接时，采用不小于连接底板厚度的角焊缝围焊，焊缝</text>
                <text x="924" y="739">需进行100%的VT+100的PT或MT检测（打底+盖面）。</text>
                <text x="913" y="752">4.</text><text x="924" y="752">所有尺寸公差最大不得超过±2mm，吊耳孔不得使用热切割，需使用机加或钻孔。</text>
                <text x="913" y="766">5.</text><text x="924" y="766">焊接完成后做喷砂处理，除锈等级2.5级。</text>
                <text x="913" y="780">6.</text><text x="924" y="780">刷红色防锈底漆2遍，面漆颜色根据现场要求确定。</text>
                <text x="913" y="793">7.</text><text x="924" y="793">制作和验收按照《钢结构工程施工质量验收规范》（GB50205）</text>
                <text x="924" y="807">及《建筑钢结构焊接技术规程》（JGJ81）或<tspan class="aws">AWS1.1-2010</tspan> 执行,未注焊缝，按最小板厚焊接，所</text>
                <text x="924" y="821">有角焊缝进行100%VT+100%的PT或MT（打底+盖面）检查，熔透焊接按100%VT+100%PT或MT+20%UT检查。</text>
                <text x="913" y="834">8.</text><text x="924" y="834">制造完成后需按相关规范完成静载1.25，动载1.1的载荷试验，并验收合格后方可使用。</text>
              </g>

              <!-- parts list and title block -->
              <path class="tb" d="M1349.5 683V619.5H1736M1349 630.5h387M1349 641.5h387M1349 651.5h387M1349 662.5h387M1349 673.5h387M1375.5 619V747M1439.5 619v65M1542.5 619V825M1581.5 619V825M1619.5 619V747M1658.5 619V747M1697.5 619V747M1400.5 684v64M1349 698.5h387M1349 713.5h387M1349 728.5h387M1349 780.5h387M1349 806.5h387M1349 825.5h387M1388.5 780v45M1697.5 780v26M1719.5 780v26M1426.5 806v19M1465.5 806v19M1504.5 806v19M1613.5 806v19M1639.5 806v19M1671.5 806v19"/>
              <path class="c" d="M1349.5 683.5H1735M1349.5 747.5H1735M1349.5 683.5V845H1736V683.5"/>
              <g class="cell">
                <text x="1362" y="625">5</text><text x="1362" y="636">4</text><text x="1362" y="647">3</text><text x="1362" y="657">2</text><text x="1362" y="668">1</text>
                <text x="1386" y="625">见本图</text><text x="1386" y="636">见本图</text><text x="1386" y="647">见本图</text><text x="1386" y="657">见本图</text><text x="1386" y="668">见本图</text>
              </g>
              <g class="cell l">
                <text x="1442" y="625">两侧劲板</text><text x="1442" y="636">吊耳加劲肋</text><text x="1442" y="647">吊耳加强环</text><text x="1442" y="657">吊耳</text><text x="1442" y="668">吊耳连接板</text>
              </g>
              <g class="arial l">
                <text x="1543" y="626">NA</text><text x="1543" y="637">T=12</text><text x="1543" y="648">T=8</text><text x="1543" y="658">T=24</text><text x="1543" y="669">T=19</text>
                <text x="1585" y="626">NA</text><text x="1585" y="637">Q235B</text><text x="1585" y="648">Q235B</text><text x="1585" y="658">Q235B</text><text x="1585" y="669">Q235B</text>
                <text x="1637" y="626">0</text><text x="1637" y="637">4</text><text x="1637" y="648">0</text><text x="1637" y="658">1</text><text x="1637" y="669">1</text>
                <text x="1664" y="626">NA</text><text x="1664" y="637">0.27</text><text x="1664" y="648">NA</text><text x="1664" y="658">3.38</text><text x="1664" y="669">6.89</text>
                <text x="1702" y="626">NA</text><text x="1702" y="637">1.09</text><text x="1702" y="648">NA</text><text x="1702" y="658">3.38</text><text x="1702" y="669">6.89</text>
              </g>
              <g class="hd">
                <text x="1363" y="679">序号</text><text x="1408" y="679">图号</text><text x="1492" y="679">名称</text><text x="1562" y="679">型号</text><text x="1601" y="679">材质</text><text x="1639" y="679">数量</text><text x="1678" y="679">单重Kg</text><text x="1717" y="679">总重Kg</text>
              </g>
              <g class="cell"><text x="1361" y="721">0</text><text x="1388" y="721">CFC</text><text x="1429" y="721">第一次发布</text></g>
              <g class="hd big">
                <text x="1362" y="735">版次</text><text x="1388" y="735">状 态</text><text x="1472" y="735">说　　明</text><text x="1562" y="735">编　制</text><text x="1601" y="735">校　核</text><text x="1639" y="735">审　核</text><text x="1678" y="735">批　准</text><text x="1716" y="735">日期</text>
                <text x="1562" y="758">图　名</text><text x="1562" y="788">图　号</text><text x="1369" y="790">项　目</text><text x="1709" y="790">版次</text>
                <text x="1369" y="813">阶　段</text><text x="1446" y="813">专　业</text><text x="1562" y="813">比例</text><text x="1626" y="813">图幅</text>
                <text x="1408" y="816">制造</text><text x="1485" y="816">结构</text><text x="1681" y="813">第</text><text x="1704" y="813">张共</text><text x="1728" y="813">张</text>
              </g>
              <g class="en">
                <text x="1362" y="744">REV.</text><text x="1388" y="744">STATUS</text><text x="1472" y="744">DESCRIPTION</text><text x="1562" y="744">PREPARED</text><text x="1601" y="744">CHECKED</text><text x="1639" y="744">APPROVED</text><text x="1678" y="744">AUTHORIZED</text><text x="1716" y="744">DATE</text>
                <text x="1562" y="769">DRAWING</text><text x="1562" y="776">NAME</text><text x="1562" y="797">DRAWING</text><text x="1562" y="803">NO.</text><text x="1369" y="800">PROJECT</text><text x="1708" y="800">REV.</text>
                <text x="1369" y="822">STAGE</text><text x="1446" y="822">SPECIALITY</text><text x="1562" y="822">SCALE</text><text x="1626" y="822">SIZE</text><text x="1705" y="822">OF</text>
              </g>
              <g class="ttl">
                <text x="1430" y="765">易构工作室</text><text x="1667" y="765">5吨吊耳组件图</text>
              </g>
              <g class="arial"><text x="1434" y="792">吊装工程</text><text x="1651" y="791">DE-5T-001</text><text x="1727" y="795">0</text><text x="1657" y="817">A3</text><text x="1691" y="817">1</text><text x="1719" y="817">1</text></g>
              <text class="copy" x="1360" y="837">本文件版权为易构工作室所有，未经许可不得转给第三者或复制。</text>
              <path class="w" d="M1583 824L1612 808M1509 814l13-3v10l-13-3zM1506 816h20M1525 816h15M1532 809v14"/><circle class="w" cx="1532" cy="816" r="5"/><circle class="w" cx="1532" cy="816" r="2.5"/>
            </svg>

            <div class="report">
              <p>计算结果如下:</p>
              <p class="in">1）局部紧接承压应力62.38Mpa <span>≤</span> 80.00Mpa（设计许用值） 满足要求;</p>
              <p class="in">2）孔壁抗拉应力75.68Mpa <span>≤</span> 115.00Mpa（设计许用值） 满足要求;</p>
              <p class="in">3）焊缝组合应力22.46Mpa <span>≤</span> 225.50Mpa（设计许用值） 满足要求;</p>
              <p class="in">结论: 设计满足要求</p>
            </div>
          </section>
        </div>
      </div>

      <footer class="status">
        <span class="tip">提示：双击标题, 关闭子窗体</span>
        <svg width="8" height="5"><path d="M1 0h6L4 4z" fill="#333"/></svg>
        <svg width="18" height="18"><path d="M3 8c0-7 12-7 12 0v5H3z" fill="#fff" stroke="#e2e2e2"/><path d="M5 15h10" stroke="#fff" stroke-width="2"/></svg>
        <a href="#">吊装助理</a>
      </footer>
    </div>
  </main>
</body>
</html>
```
FILE: styles.css
```css
* {
  box-sizing: border-box;
}

body {
  margin: 0;
  height: 100vh;
  display: flex;
  flex-direction: column;
  overflow: hidden;
  background-color: #f0f0f0;
  color: #222;
  font-family: "Open Sans", "Noto Sans CJK SC", sans-serif;
  font-size: 12px;
  line-height: 16px;
}

button, input, select {
  font: inherit;
  color: inherit;
  margin: 0;
}

button {
  background: none;
  border: none;
  padding: 0;
  white-space: nowrap;
}

h1, h2, p, ul {
  margin: 0;
  padding: 0;
  font-size: 12px;
  font-weight: normal;
}

.defs {
  position: absolute;
  width: 0;
  height: 0;
}

/* Title bar */
.titlebar {
  display: grid;
  grid-template-columns: 1fr auto 1fr auto;
  align-items: center;
  height: 32px;
  padding-top: 1px;
  background-color: #5a8b7b;
  color: #fff;
}

.quick {
  display: flex;
  align-items: center;
  gap: 10px;
  padding-left: 10px;
}

.titlebar h1 {
  padding-left: 140px;
}

.titlebar h1 span {
  color: #b3cfc5;
}

.licence {
  display: flex;
  align-items: center;
  justify-content: flex-end;
  gap: 5px;
  padding-right: 3px;
}

.licence .state {
  margin: 0 4px 0 9px;
}

.winbtns {
  display: flex;
}

.winbtns button {
  width: 48px;
  height: 31px;
}

.menubar {
  display: flex;
  height: 27px;
  background-color: #5a8b7b;
}

.menu {
  padding: 7px 13px 0;
  color: #fff;
  text-decoration: none;
}

.menu.active {
  background-color: #dcdcdc;
  color: #111;
}

.account {
  display: flex;
  align-items: center;
  gap: 11px;
  margin-left: auto;
}

.account a {
  display: flex;
  align-items: center;
  gap: 13px;
  color: #fff;
  text-decoration: none;
}

.mdi {
  display: flex;
  gap: 14px;
  padding-right: 8px;
}

/* Ribbon */
.ribbon {
  display: flex;
  height: 85px;
  background-color: #dcdcdc;
  border-bottom: 1px solid #c6c6c6;
}

.options {
  display: flex;
  gap: 10px;
  width: 260px;
  padding: 12px 0 0 9px;
  border-right: 1px solid #c6c6c6;
}

.options .col {
  display: flex;
  flex-direction: column;
  gap: 12px;
}

.options .mid {
  padding-top: 14px;
}

.options label {
  display: flex;
  align-items: center;
  gap: 5px;
  white-space: nowrap;
}

.options input {
  appearance: none;
  width: 14px;
  height: 14px;
  background-color: #fff;
  border: 1px solid #a6a6a6;
}

.options input:checked {
  background-image: url("data:image/svg+xml,%3Csvg xmlns='http://www.w3.org/2000/svg' viewBox='0 0 12 12'%3E%3Cpath d='M2 6l3 3 5-6' fill='none' stroke='%23666' stroke-width='1.5'/%3E%3C/svg%3E");
}

.group {
  display: flex;
  padding: 0 4px;
  border-right: 1px solid #c6c6c6;
}

.group button {
  display: flex;
  flex-direction: column;
  align-items: center;
  gap: 5px;
  min-width: 40px;
  height: 64px;
  padding: 10px 4px 0;
}

.group svg {
  flex: none;
  width: 32px;
  height: 32px;
}

.group .drop {
  width: 52px;
}

.group .drop.wide {
  width: 62px;
}

.drop span {
  display: flex;
  align-items: center;
}

.drop i {
  width: 5px;
  height: 5px;
  margin: 0 2px 4px 4px;
  border: solid #555;
  border-width: 0 1px 1px 0;
  transform: rotate(45deg);
}

/* Workspace */
.workspace {
  flex: 1;
  min-height: 0;
  display: flex;
}

.sidebar {
  display: grid;
  grid-template-columns: 1fr 16px;
  grid-template-rows: 1fr 18px;
  width: 258px;
  border: 1px solid #868a96;
  border-bottom: none;
}

.tree-wrap {
  overflow: hidden;
  background-color: #fff;
}

.vbar {
  padding: 18px 0 0 7px;
}

.vbar i {
  display: block;
  width: 2px;
  height: 686px;
  background-color: #868686;
}

.hbar {
  padding: 8px 0 0 18px;
}

.hbar i {
  display: block;
  width: 136px;
  height: 2px;
  background-color: #868686;
}

.tree {
  padding-left: 3px;
  color: #000;
  font-family: "Noto Sans CJK SC", sans-serif;
}

.tree ul {
  padding-left: 23px;
}

.tree li {
  list-style: none;
  position: relative;
}

.tree li::before {
  content: "";
  position: absolute;
  top: 0;
  bottom: 0;
  left: 11px;
  border-left: 1px dotted #777;
}

.tree > li::before {
  top: 17px;
}

.tree ul ul > li:last-child::before {
  bottom: auto;
  height: 17px;
}

.node {
  position: relative;
  display: flex;
  align-items: center;
  height: 30px;
  padding-left: 26px;
  font-size: 15px;
  white-space: nowrap;
}

.node::before {
  content: "";
  position: absolute;
  top: 17px;
  left: 12px;
  width: 12px;
  border-top: 1px dotted #777;
}

.node svg {
  flex: none;
  width: 18px;
  height: 16px;
  margin: 2px 6px 0 0;
}

.exp {
  position: absolute;
  top: 13px;
  left: 7px;
  width: 9px;
  height: 9px;
  border: 1px solid #8e8e8e;
  border-radius: 1px;
  background: linear-gradient(#3c5cb0, #3c5cb0) center / 5px 1px no-repeat, linear-gradient(#fff, #ddd);
}

.exp.plus {
  background: linear-gradient(#3c5cb0, #3c5cb0) center / 5px 1px no-repeat, linear-gradient(#3c5cb0, #3c5cb0) center / 1px 5px no-repeat, linear-gradient(#fff, #ddd);
}

.docs {
  flex: 1;
  min-width: 0;
  display: flex;
  flex-direction: column;
  padding-left: 11px;
}

.doctabs {
  display: flex;
  align-items: flex-end;
  gap: 2px;
  height: 26px;
  padding: 0 0 3px 2px;
}

.dt {
  display: flex;
  align-items: center;
  justify-content: space-between;
  gap: 7px;
  height: 21px;
  padding: 0 10px 0 12px;
  background-color: #d4d4d4;
  border-right: 1px solid #777;
  color: #0078d7;
  font-size: 13px;
  font-weight: bold;
}

.dt b {
  color: #000;
  font-size: 14px;
}

.dt.on {
  height: 23px;
  gap: 14px;
  padding-left: 10px;
  background-color: #fff;
}

.page {
  flex: 1;
  min-height: 0;
  display: flex;
  flex-direction: column;
  background-color: #f9f9f9;
  border: 1px solid #696969;
  border-right: none;
  border-bottom: 1px solid #ccc;
}

/* Tabs */
.tabs {
  display: flex;
  align-items: flex-end;
  height: 21px;
  color: #000;
  border-bottom: 1px solid #e4e4e4;
}

.tabs.top {
  background-color: #f0f0f0;
}

.tab {
  height: 19px;
  padding: 0 4px;
  background-color: #f2f2f2;
  border: 1px solid #e0e0e0;
  border-bottom: none;
}

.tab.on {
  height: 21px;
  padding: 0 7px 3px;
  margin-bottom: -1px;
  background-color: #f9f9f9;
}

.split {
  flex: 1;
  min-height: 0;
  display: flex;
  padding: 3px 0 12px 6px;
}

/* Form */
.form, .tabs {
  font-family: "Liberation Serif", "Noto Sans CJK SC", serif;
}

.form {
  flex: none;
  display: flex;
  flex-direction: column;
  width: 400px;
  padding: 0 5px 0 4px;
  overflow: hidden;
  border: 1px solid #646464;
}

.form > * {
  flex: none;
}

.head {
  display: flex;
  align-items: center;
  height: 26px;
  padding-right: 4px;
}

.head .far {
  margin-left: auto;
  margin-right: 25px;
}

.head h2, .cap, .judge h2 {
  padding-left: 2px;
}

.cap {
  height: 21px;
  line-height: 20px;
}

.cap.tall {
  height: 22px;
  line-height: 22px;
}

.box {
  border: 1px solid #646464;
}

.row {
  display: flex;
  align-items: center;
  white-space: nowrap;
}

.load {
  display: grid;
  gap: 5px;
  padding: 3px 0 6px 5px;
}

.link {
  display: grid;
  gap: 6px;
  padding: 3px 0 5px 7px;
}

.mat {
  padding: 6px 0 4px 5px;
}

.weld {
  position: relative;
  padding: 6px 0 4px 4px;
}

.weld::after {
  content: "";
  position: absolute;
  top: -2px;
  right: -2px;
  width: 5px;
  height: 5px;
  background-color: #8296f5;
  transform: rotate(45deg);
}

.calc {
  padding: 3px 0 7px 4px;
}

.ck {
  display: flex;
  align-items: center;
  gap: 5px;
}

.ck.loose {
  gap: 9px;
}

.ck.rev {
  gap: 7px;
}

.form input[type="checkbox"], .form input[type="radio"] {
  appearance: none;
  flex: none;
  width: 13px;
  height: 13px;
  border: 1px solid #767676;
  border-radius: 3px;
  background-color: #f6f6f6;
}

.form input[type="radio"] {
  border-radius: 50%;
}

.form input[type="checkbox"]:checked {
  border-color: #005fb8;
  background: #005fb8 url("data:image/svg+xml,%3Csvg xmlns='http://www.w3.org/2000/svg' viewBox='0 0 12 12'%3E%3Cpath d='M3 6l2 2 4-4' fill='none' stroke='%23fff'/%3E%3C/svg%3E");
}

.form input[type="radio"]:checked {
  border: 4px solid #005fb8;
  background-color: #fff;
}

.spin {
  display: flex;
  height: 21px;
  padding: 1px;
  background-color: #fff;
  border: 1px solid #a2a4a8;
}

.spin.left {
  flex-direction: row-reverse;
}

.spin.off {
  background-color: #f0f0f0;
  color: #888;
}

.spin input {
  flex: 1;
  min-width: 0;
  padding: 0 0 3px;
  border: none;
  background: none;
  text-align: center;
  font-family: "Noto Sans CJK SC", sans-serif;
  line-height: 14px;
  color: #000;
}

.spin.off input {
  color: #888;
}

.ud {
  display: flex;
  flex-direction: column;
  justify-content: space-between;
  width: 13px;
}

.ud button {
  display: flex;
  align-items: center;
  justify-content: center;
  height: 8px;
  background-color: #f4f4f4;
  border: 1px solid #ddd;
}

.ud button::before {
  content: "";
  border: 3px solid transparent;
  border-top: none;
  border-bottom: 4px solid #111;
}

.ud button:last-child::before {
  transform: rotate(180deg);
}

.off .ud button::before {
  border-bottom-color: #aaa;
}

select {
  appearance: none;
  height: 20px;
  padding: 0 4px;
  background: #fff url("data:image/svg+xml,%3Csvg xmlns='http://www.w3.org/2000/svg' width='9' height='6'%3E%3Cpath d='M1 1l3.5 3.5L8 1' fill='none' stroke='%23777'/%3E%3C/svg%3E") right 4px center no-repeat;
  border: 1px solid #cfcfcf;
  border-radius: 2px;
}

.form select {
  color: #000;
}

select:disabled {
  background-color: #f9f9f9;
  border-color: #e4e4e4;
  opacity: 1;
}

.unit {
  font-family: "Liberation Mono", monospace;
  font-size: 10px;
}

.g8 { margin-left: 8px; }
.g16 { margin-left: 16px; }
.g30 { margin-left: 30px; }
.g36 { margin-left: 36px; }
.g46 { margin-left: 46px; }
.w16 { width: 16px; }
.w20 { width: 20px; }
.w50 { width: 50px; }
.w53 { width: 53px; }
.w57 { width: 57px; }
.w60 { width: 60px; }
.w66 { width: 66px; }
.w69 { width: 69px; }
.w74 { width: 74px; }
.w75 { width: 75px; }
.w76 { width: 76px; }
.w80 { width: 80px; }
.w81 { width: 81px; }
.w82 { width: 82px; }
.w89 { width: 89px; }
.w94 { width: 94px; }

.unit.w50 {
  padding-left: 4px;
}

.btn {
  height: 30px;
  background-color: #fdfdfd;
  border: 1px solid #c9c9c9;
  border-radius: 4px;
}

.btn.sm {
  height: 21px;
}

.push {
  margin-left: auto;
}

.actions {
  display: flex;
  align-items: center;
  justify-content: flex-end;
  height: 35px;
}

.auto {
  width: 80px;
  margin: 0 7px 0 12px;
  color: #0078d7;
}

.clip {
  display: flex;
  align-items: center;
  justify-content: center;
  width: 30px;
}

.primary {
  width: 74px;
  margin: 0 -2px 0 2px;
  background-color: #e0eef9;
  border-color: #0078d7;
}

.form .tabs {
  margin-left: -2px;
}

.tabpage {
  height: 98px;
  margin: 0 2px 0 -2px;
  padding: 3px 11px 3px 6px;
  border: 1px solid #e4e4e4;
  border-top: none;
}

.sheet {
  display: flex;
  flex-direction: column;
  gap: 3px;
  height: 92px;
  padding: 9px 0 0 5px;
  border: 1px solid #646464;
  border-bottom: none;
}

fieldset {
  min-width: 0;
  margin: 0 0 0 3px;
  padding: 0 2px 1px 4px;
  border: 1px solid #dcdcdc;
}

legend {
  padding: 0 2px;
  line-height: 14px;
  color: #000;
}

fieldset .unit {
  padding-left: 4px;
}

.judge {
  display: flex;
  align-items: center;
  gap: 6px;
  height: 31px;
  padding-right: 1px;
}

.judge h2 {
  margin-right: auto;
}

.result {
  display: flex;
  flex-direction: column;
  gap: 5px;
  padding: 2px 0 6px 5px;
}

.result h2 {
  height: 15px;
}

.result .row, .code .row {
  display: grid;
  grid-template-columns: 88px 61px 30px 108px 61px 30px;
  height: 21px;
}

.val {
  width: 61px;
  height: 21px;
  padding: 0 2px 3px;
  color: #000;
  background-color: #90ee90;
  border: 1px solid #e4e4e4;
  border-bottom-color: #777;
  font-family: "Noto Sans CJK SC", sans-serif;
}

.val.none {
  background-color: #f0f0f0;
  border-bottom-color: #e4e4e4;
}

.val.zero {
  padding-left: 4px;
  background-color: #f4f4f4;
}

.result .unit, .code .unit {
  padding-left: 6px;
}

.unit.cn {
  font-family: "Noto Sans CJK SC", sans-serif;
  font-size: 12px;
}

.form .last {
  margin-top: 3px;
}

.tabpage.grow {
  padding-right: 0;
}

.code {
  gap: 7px;
  padding: 8px 0 0 17px;
  border-right: none;
}

.code .row {
  grid-template-columns: 76px 61px 52px 86px 61px 30px;
}

/* Drawing view */
.view {
  flex: 1;
  min-width: 0;
  display: flex;
  flex-direction: column;
  padding: 0 13px 16px 6px;
}

.view .tabs {
  margin: 0 0 1px 1px;
}

.view .tab {
  padding: 0 5px;
}

.view .tab.on {
  padding: 0 6px 3px;
}

.cad {
  flex: 1;
  min-height: 0;
  margin: 0 2px 0 3px;
  background-color: #000;
}

.cad path, .cad circle {
  stroke-width: 1px;
}

.cad text {
  dominant-baseline: central;
  fill: #c8c8c8;
  font-family: "Liberation Serif", "Noto Sans CJK SC", serif;
}

.cad .w { fill: none; stroke: #fff; }
.cad .gr { fill: none; stroke: #aaa; }
.cad .gr2 { fill: none; stroke: #ddd; }
.cad .tb { fill: none; stroke: #d8d8d8; }
.cad .c { fill: none; stroke: #00e5e5; }
.cad .b { fill: none; stroke: #00f; }
.cad .n { fill: none; stroke: #00dc00; }
.cad .a2 { marker-start: url(#ag); marker-end: url(#ag); }
.cad .dash { stroke-dasharray: 3 2; }

.cad .dim text {
  fill: #0f0;
  font-family: "Liberation Sans", sans-serif;
  font-size: 10px;
  text-anchor: middle;
}

.cad .zone text {
  fill: #0cc;
  font-family: "Liberation Sans", sans-serif;
  font-size: 7px;
  text-anchor: middle;
}

.cad .side text {
  font-size: 9px;
  text-anchor: middle;
}

.cad .tiny {
  font-size: 8px;
}

.cad .part {
  font-family: "Liberation Sans", "Noto Sans CJK SC", sans-serif;
  font-size: 10px;
  text-anchor: middle;
}

.cad .cap2, .cad .wt {
  font-family: "Liberation Sans", "Noto Sans CJK SC", sans-serif;
  font-size: 9px;
}

.cad .cap2 {
  text-anchor: middle;
}

.cad .notes text {
  font-size: 8px;
}

.cad .notes .aws {
  fill: #fff;
  font-family: "Open Sans", sans-serif;
  font-size: 7px;
  font-weight: bold;
}

.cad .cell text {
  font-size: 7px;
  text-anchor: middle;
}

.cad .arial text {
  fill: #eee;
  font-family: "Liberation Sans", "Noto Sans CJK SC", sans-serif;
  font-size: 8px;
  text-anchor: middle;
}

.cad .cell.l text, .cad .arial.l text {
  text-anchor: start;
}

.cad .hd text {
  font-size: 8px;
  text-anchor: middle;
}

.cad .hd.big text {
  font-size: 9px;
}

.cad .en text {
  font-size: 6px;
  text-anchor: middle;
}

.cad .ttl text {
  font-size: 11px;
  text-anchor: middle;
}

.cad .copy {
  font-size: 9px;
}

.report {
  height: 118px;
  margin-top: 10px;
  padding: 2px;
  background-color: #90ee90;
  border: 1px solid #696969;
  border-right-color: #e4e4e4;
  border-bottom-color: #e4e4e4;
  color: #000;
  font-family: "Liberation Serif", "Noto Sans CJK SC", serif;
}

.report .in {
  padding-left: 23px;
}

.report span {
  padding: 0 2px;
}

/* Status bar */
.status {
  display: flex;
  align-items: center;
  justify-content: flex-end;
  height: 24px;
  padding-right: 6px;
}

.status .tip {
  margin-right: 50px;
}

.status svg + svg {
  margin: 0 12px 0 13px;
}

.status a {
  color: #0000ff;
}
```
